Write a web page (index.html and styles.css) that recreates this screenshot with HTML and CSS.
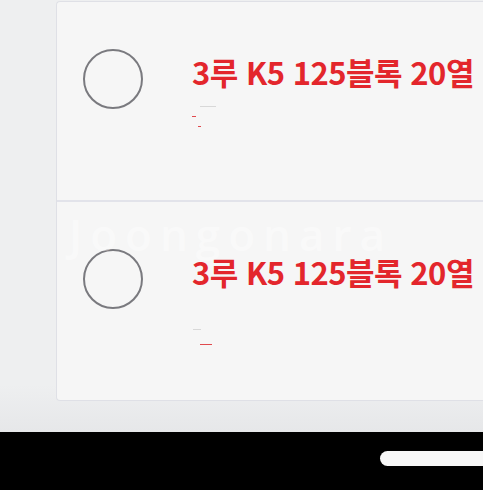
FILE: index.html
```html
<!DOCTYPE html>
<html lang="ko">
<head>
<meta charset="utf-8">
<link rel="stylesheet" href="styles.css">
</head>
<body>
<div class="screen">
  <div class="card">
    <div class="row">
      <span class="radio"></span>
      <div class="info">
        <div class="title">3루 K5 125블록 20열</div>
        <div class="marks">
          <span class="mark grey w16"></span>
          <span class="mark red w4"></span>
          <span class="mark red w3"></span>
        </div>
      </div>
    </div>
    <div class="row">
      <span class="watermark">Joongonara</span>
      <span class="radio"></span>
      <div class="info">
        <div class="title">3루 K5 125블록 20열</div>
        <div class="marks lower">
          <span class="mark grey w8"></span>
          <span class="mark red w12"></span>
        </div>
      </div>
    </div>
  </div>
</div>
<div class="navbar">
  <span class="handle"></span>
</div>
</body>
</html>
```

FILE: styles.css
```css
html, body {
  margin: 0;
  padding: 0;
}
body {
  width: 483px;
  height: 490px;
  overflow: hidden;
  background: #eeeff0;
  font-family: "Noto Sans CJK KR", "Noto Sans", sans-serif;
}
.screen {
  height: 432px;
  box-sizing: border-box;
  padding: 1px 0 0 56px;
  background: linear-gradient(to bottom, #eeeff0 0, #eeeff0 385px, #e6e7e9 432px);
}
.card {
  background: #f6f6f6;
  border: 1px solid #dfe0e6;
  border-right: none;
  border-radius: 4px 0 0 4px;
}
.row {
  position: relative;
  height: 198px;
  display: flex;
  align-items: flex-start;
  padding-left: 26px;
  overflow: hidden;
}
.row + .row {
  border-top: 2px solid #e2e3ea;
}
.radio {
  flex: none;
  width: 56px;
  height: 56px;
  margin-top: 47px;
  border: 2px solid #7a7a7f;
  border-radius: 50%;
}
.info {
  margin-left: 49px;
  padding-top: 52px;
}
.title {
  position: relative;
  color: #e3262c;
  font-size: 31px;
  font-weight: 700;
  line-height: 36px;
  letter-spacing: -0.5px;
  white-space: nowrap;
}
.marks {
  display: flex;
  flex-direction: column;
  gap: 9px;
  padding-top: 16px;
}
.marks.lower {
  padding-top: 39px;
  gap: 14px;
}
.mark {
  display: block;
  height: 1px;
}
.mark.grey { background: #d8d8d8; }
.mark.red { background: #e04a4e; }
.w3 { width: 3px; margin-left: 6px; }
.w4 { width: 4px; }
.w8 { width: 8px; margin-left: 1px; }
.w12 { width: 12px; margin-left: 8px; }
.w16 { width: 16px; margin-left: 8px; }
.watermark {
  position: absolute;
  left: 12px;
  top: 2px;
  color: rgba(255, 255, 255, 0.4);
  font-family: "Open Sans", sans-serif;
  font-weight: 600;
  font-size: 44px;
  line-height: 60px;
  letter-spacing: 8px;
  white-space: nowrap;
  pointer-events: none;
}
.navbar {
  height: 58px;
  background: #000;
  position: relative;
}
.handle {
  position: absolute;
  left: 380px;
  top: 19px;
  width: 120px;
  height: 15px;
  border-radius: 8px;
  background: #f7f7f7;
}
```
